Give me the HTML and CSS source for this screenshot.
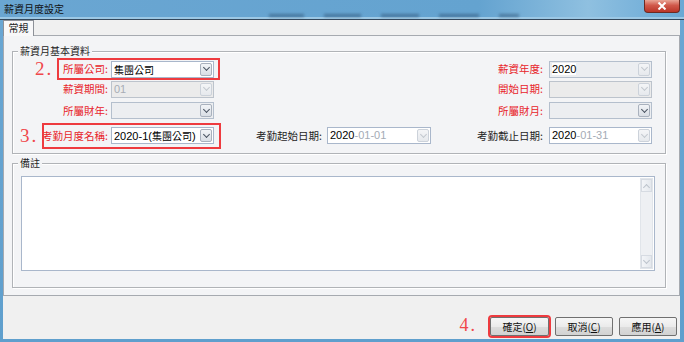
FILE: index.html
```html
<!DOCTYPE html>
<html lang="zh-Hant">

<head>
    <meta charset="UTF-8">
    <title>薪資月度設定</title>
    <link rel="stylesheet" href="styles.css">
</head>

<body>
    <div class="window">
        <div class="titlebar">
            <span class="title">薪資月度設定</span>
            <!-- blurred shapes showing through the glass frame -->
            <div class="glass">
                <span class="blob w35"></span>
                <span class="blob w37"></span>
                <span class="blob w38"></span>
                <span class="blob w40"></span>
                <span class="blob w20"></span>
            </div>
            <span class="close">
                <svg width="10" height="8" viewBox="0 0 10 8"><path d="M1.5 0.5 L8.5 7.5 M8.5 0.5 L1.5 7.5" stroke="#fff" stroke-width="2" /></svg>
            </span>
        </div>

        <div class="client">
            <div class="tabs">
                <div class="tab">常規</div>
            </div>

            <div class="panel">
                <div class="group basic">
                    <div class="group-title">薪資月基本資料</div>
                    <div class="form">
                        <!-- row 1 -->
                        <div class="pair marked mark-2">
                            <span class="step">2.</span>
                            <span class="lbl req">所屬公司:</span>
                            <div class="combo"><span class="val cjk">集團公司</span><span class="drop"></span></div>
                        </div>
                        <span></span>
                        <span></span>
                        <span class="lbl req">薪資年度:</span>
                        <div class="combo grey"><span class="val"><b>2020</b></span><span class="drop off"></span></div>

                        <!-- row 2 -->
                        <div class="pair">
                            <span class="lbl req">薪資期間:</span>
                            <div class="combo disabled"><span class="val dim">01</span><span class="drop off"></span></div>
                        </div>
                        <span></span>
                        <span></span>
                        <span class="lbl req">開始日期:</span>
                        <div class="combo disabled"><span class="val"></span><span class="drop off"></span></div>

                        <!-- row 3 -->
                        <div class="pair">
                            <span class="lbl req">所屬財年:</span>
                            <div class="combo grey"><span class="val"></span><span class="drop"></span></div>
                        </div>
                        <span></span>
                        <span></span>
                        <span class="lbl req">所屬財月:</span>
                        <div class="combo grey"><span class="val"></span><span class="drop"></span></div>

                        <!-- row 4 -->
                        <div class="pair marked mark-3">
                            <span class="step">3.</span>
                            <span class="lbl req">考勤月度名稱:</span>
                            <div class="combo"><span class="val">2020-1(<span class="cjk">集團公司</span>)</span><span class="drop"></span></div>
                        </div>
                        <span class="lbl">考勤起始日期:</span>
                        <div class="combo date"><span class="val"><b>2020</b>-01-01</span><span class="drop off"></span></div>
                        <span class="lbl">考勤截止日期:</span>
                        <div class="combo date"><span class="val"><b>2020</b>-01-31</span><span class="drop off"></span></div>
                    </div>
                </div>

                <div class="group memo-group">
                    <div class="group-title">備註</div>
                    <div class="memo">
                        <div class="memo-text"></div>
                        <div class="scrollbar">
                            <span class="sb-btn up"></span>
                            <span class="sb-track"></span>
                            <span class="sb-btn down"></span>
                        </div>
                    </div>
                </div>
            </div>

            <div class="buttons">
                <span class="step step-4">4.</span>
                <button class="btn marked-btn">確定(<u>O</u>)</button>
                <button class="btn">取消(<u>C</u>)</button>
                <button class="btn">應用(<u>A</u>)</button>
            </div>
        </div>
    </div>
</body>

</html>
```

FILE: styles.css
```css
* {
    box-sizing: border-box;
}

body {
    margin: 0;
    width: 684px;
    height: 342px;
    overflow: hidden;
    background: linear-gradient(to bottom, #6aa7d3, #5f9fcd);
    font-family: "Noto Sans CJK TC", "Noto Sans CJK SC", sans-serif;
    font-size: 10.5px;
    color: #1e1e1e;
}

.window {
    display: flex;
    flex-direction: column;
    height: 342px;
}

/* title bar */
.titlebar {
    height: 20px;
    display: flex;
    align-items: flex-start;
    padding-left: 4px;
    background: linear-gradient(to right, #6aa6d2 0%, #64a3d0 70%, #8fc0e0 86%, #78b2da 94%, #6aa8d4 100%);
    border-bottom: 1px solid #34485c;
    box-shadow: inset 0 -2px 0 #9cc8e5;
}

.title {
    font-size: 10px;
    line-height: 18px;
    color: #111;
}

.glass {
    flex: 1;
    align-self: stretch;
    display: flex;
    align-items: flex-end;
    gap: 20px;
    padding: 0 0 2px 205px;
}

.blob {
    height: 3px;
    background: rgba(28, 58, 88, 0.45);
    filter: blur(1.5px);
}

.w20 { width: 20px; }
.w35 { width: 35px; }
.w37 { width: 37px; }
.w38 { width: 38px; }
.w40 { width: 40px; }

.close {
    width: 36px;
    height: 13px;
    margin-right: 4px;
    display: flex;
    align-items: center;
    justify-content: center;
    background: linear-gradient(to bottom, #e9a596 0%, #d0584a 45%, #b93528 100%);
    border: 1px solid #6d2a22;
    border-top: none;
    border-radius: 0 0 4px 4px;
}

/* client area */
.client {
    flex: 1;
    margin: 0 4px 3px 3px;
    background: #f0f0f0;
    display: flex;
    flex-direction: column;
}

.tabs {
    height: 15px;
    display: flex;
    align-items: flex-end;
}

.tab {
    position: relative;
    z-index: 1;
    height: 16px;
    margin-bottom: -1px;
    width: 31px;
    text-align: center;
    font-size: 10px;
    line-height: 14px;
    background: #f8f8f9;
    border: 1px solid #8d9198;
    border-bottom: none;
}

.panel {
    height: 261px;
    padding: 15px 13px 0 8px;
    background: #f3f4f6;
    border: 1px solid #a6aab0;
}

/* group boxes */
.group {
    display: flex;
    flex-direction: column;
    border: 1px solid #b0b3b7;
    box-shadow: 1px 1px 0 #fff, inset 1px 1px 0 #fff;
}

.group-title {
    align-self: flex-start;
    margin: -8px 0 0 5px;
    padding: 0 2px;
    height: 14px;
    line-height: 14px;
    font-size: 10px;
    background: #f3f4f6;
}

.basic {
    padding-bottom: 4px;
}

.form {
    margin-top: 1px;
    display: grid;
    grid-template-columns: 201px 113px 104px 118px 103px;
    grid-template-rows: 20px 20px 23px 27px;
    align-items: center;
}

.pair {
    align-self: stretch;
    display: flex;
    align-items: center;
}

.pair .lbl {
    flex: 1;
    padding-right: 3px;
}

.pair .combo {
    width: 103px;
}

.lbl {
    text-align: right;
    white-space: nowrap;
    line-height: 14px;
}

.form > .lbl:nth-child(5n+2) {
    padding-right: 5px;
}

.form > .lbl:nth-child(5n+4) {
    padding-right: 6px;
}

.req {
    color: #e8242a;
}

/* combo / date fields */
.combo {
    height: 17px;
    display: flex;
    align-items: stretch;
    padding: 1px;
    background: #fff;
    border: 1px solid #a9b7cb;
}

.combo.grey {
    background: #eceef1;
    border-color: #b4bfcd;
}

.combo.disabled {
    background: #ebebeb;
    border-color: #bcc3cc;
}

.val {
    flex: 1;
    padding-left: 1px;
    font-family: "Liberation Sans", "Noto Sans CJK TC", sans-serif;
    font-size: 11px;
    line-height: 13px;
    white-space: nowrap;
    overflow: hidden;
    color: #000;
}

.cjk {
    font-family: "Noto Sans CJK TC", "Noto Sans CJK SC", sans-serif;
    font-size: 10px;
}

.val.dim {
    color: #a7adb5;
}

.combo.date .val {
    color: #a4abb5;
}

.val b {
    font-weight: normal;
    color: #000;
    background: #fff;
}

.drop {
    width: 12px;
    flex: none;
    display: flex;
    align-items: center;
    justify-content: center;
    background: linear-gradient(to bottom, #f2f4f7, #d9dee5);
    border: 1px solid #a9b1bd;
    border-radius: 2px;
}

.drop::after {
    content: "";
    width: 4px;
    height: 4px;
    margin-top: -3px;
    border-right: 1.5px solid #4a5461;
    border-bottom: 1.5px solid #4a5461;
    transform: rotate(45deg);
}

.drop.off {
    background: linear-gradient(to bottom, #f4f5f7, #e6e9ed);
    border-color: #ccd2da;
}

.drop.off::after {
    border-color: #c3c8cf;
}

/* red callouts */
.step {
    color: #f0474b;
    font-family: "Liberation Serif", serif;
    font-size: 19px;
    letter-spacing: 2px;
    line-height: 18px;
}

.marked {
    position: relative;
}

.marked::before {
    content: "";
    position: absolute;
    border: 2px solid #ee3b3f;
    pointer-events: none;
}

.mark-2 .step {
    margin-left: 22px;
}

.mark-2::before {
    top: -1px;
    bottom: -1px;
    left: 44px;
    right: -6px;
}

.mark-3 .step {
    margin-left: 7px;
}

.mark-3::before {
    top: 1px;
    bottom: 0;
    left: 29px;
    right: -7px;
}

/* memo */
.memo-group {
    margin-top: 9px;
    padding: 0 10px 16px 8px;
}

.memo-group .group-title {
    margin-left: -3px;
    margin-bottom: 6px;
}

.memo {
    height: 95px;
    display: flex;
    padding: 1px;
    background: #fff;
    border: 1px solid #a9b7cb;
}

.memo-text {
    flex: 1;
}

.scrollbar {
    width: 13px;
    display: flex;
    flex-direction: column;
    background: #eef0f3;
    border: 1px solid #e1e5ea;
}

.sb-track {
    flex: 1;
}

.sb-btn {
    height: 13px;
    display: flex;
    align-items: center;
    justify-content: center;
    background: linear-gradient(to right, #f3f5f8, #e4e8ed);
    border: 1px solid #d6dbe2;
}

.sb-btn::after {
    content: "";
    width: 4px;
    height: 4px;
    border-right: 1px solid #bcc3cc;
    border-bottom: 1px solid #bcc3cc;
}

.sb-btn.up::after {
    margin-top: 3px;
    transform: rotate(-135deg);
}

.sb-btn.down::after {
    margin-top: -3px;
    transform: rotate(45deg);
}

/* dialog buttons */
.buttons {
    flex: 1;
    display: flex;
    justify-content: flex-end;
    align-items: flex-start;
    gap: 6px;
    padding: 21px 3px 0 0;
}

.step-4 {
    margin: -1px 7px 0 0;
    font-size: 18px;
}

.btn {
    width: 58px;
    height: 19px;
    padding: 0;
    font-family: "Noto Sans CJK TC", "Noto Sans CJK SC", sans-serif;
    font-size: 10px;
    line-height: 15px;
    color: #111;
    background: linear-gradient(to bottom, #f6f6f6 0%, #ebebeb 50%, #dddddd 51%, #d2d2d2 100%);
    border: 1px solid #707070;
    border-radius: 2px;
}

.btn.marked-btn {
    width: 59px;
    outline: 2px solid #ee3b3f;
    outline-offset: 0;
}
```
